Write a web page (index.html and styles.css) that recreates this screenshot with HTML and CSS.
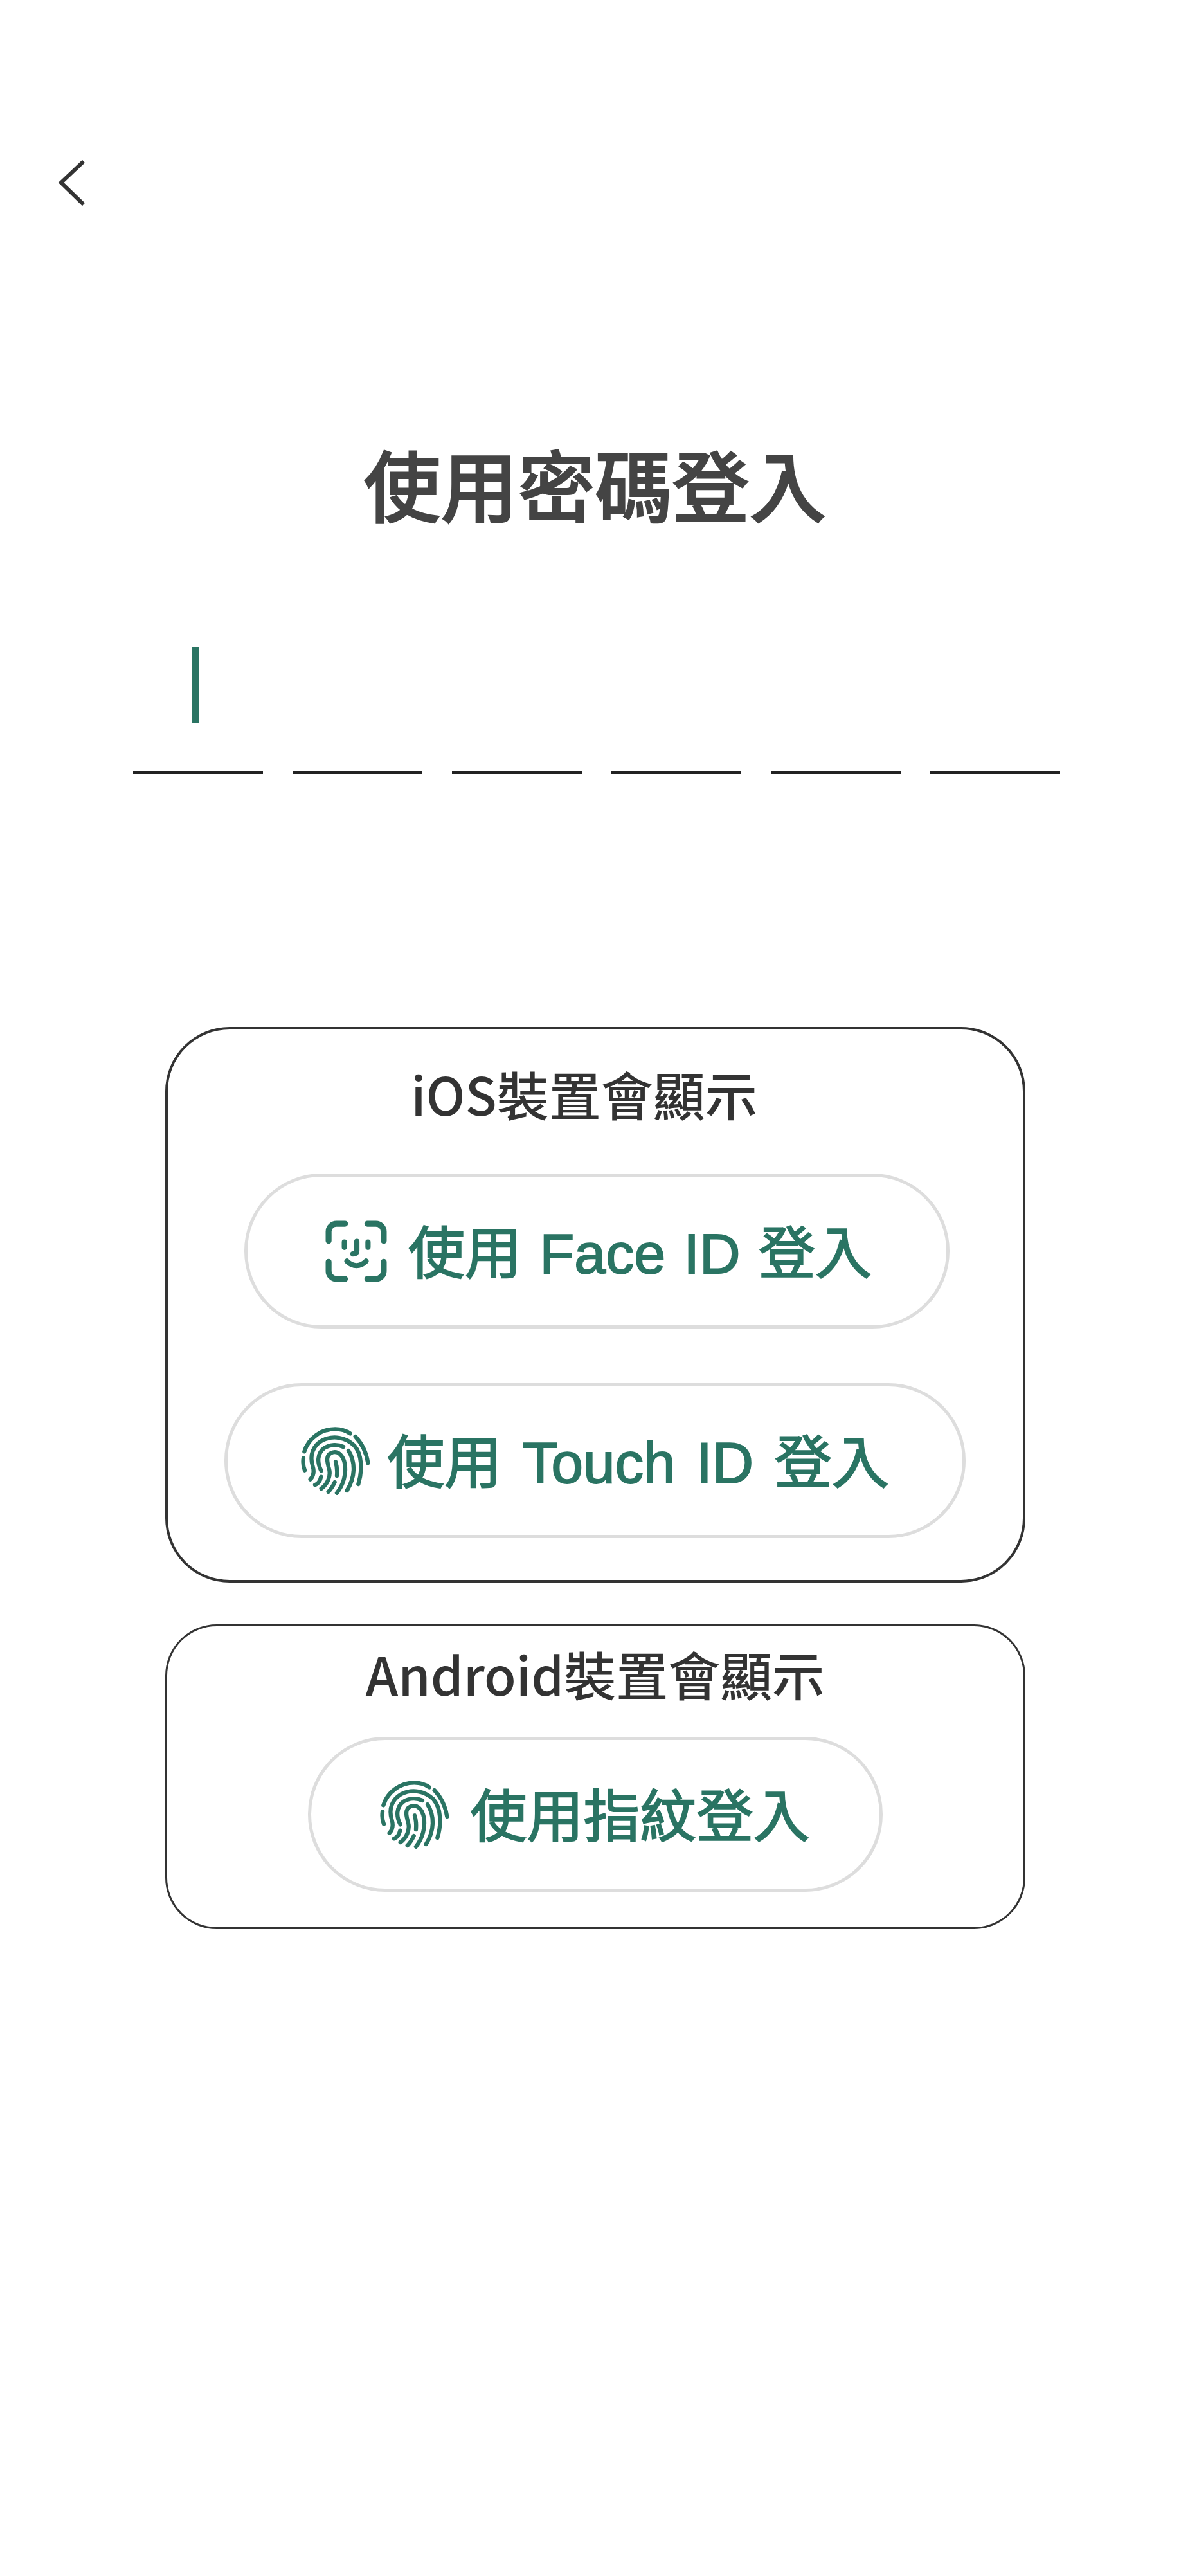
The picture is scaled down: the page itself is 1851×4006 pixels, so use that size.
FILE: index.html
```html
<!DOCTYPE html>
<html lang="zh-Hant">
<head>
  <meta charset="UTF-8">
  <meta name="viewport" content="width=device-width, initial-scale=1.0">
  <title>使用密碼登入</title>
  <link rel="stylesheet" href="styles.css">
</head>
<body>
  <svg width="0" height="0" class="defs">
    <symbol id="fingerprint" viewBox="91 117 322 318">
      <g fill="none" stroke="#2a7463" stroke-width="19" stroke-linecap="round" stroke-linejoin="round">
        <path d="M106 232C125 170 185 127 250 127C277 127 300 134 320 148"/>
        <path d="M344 162C375 195 396 238 403 285"/>
        <path d="M102 262C99 282 101 302 108 320"/>
        <path d="M134 362C150 345 153 325 145 300C130 250 145 205 190 180C240 155 300 165 340 205C375 245 378 320 358 384"/>
        <path d="M185 322C165 285 165 240 200 215C228 198 262 198 288 210"/>
        <path d="M312 228C345 280 345 350 305 414"/>
        <path d="M156 388C172 382 180 368 184 350"/>
        <path d="M185 405C215 385 230 345 222 315C212 280 205 250 232 238C262 225 288 250 295 290C302 335 290 385 258 425"/>
        <path d="M218 420C230 408 240 392 248 375"/>
        <path d="M252 280C258 300 260 322 258 345"/>
      </g>
    </symbol>
  </svg>

  <div class="page">
    <a class="back" href="#">
      <svg width="44" height="74" viewBox="0 0 44 74">
        <path d="M40 4L5 37L40 71" fill="none" stroke="#333" stroke-width="6"/>
      </svg>
    </a>

    <h1 class="title">使用密碼登入</h1>

    <div class="code-row">
      <div class="code-cell active"><span class="caret"></span></div>
      <div class="code-cell"></div>
      <div class="code-cell"></div>
      <div class="code-cell"></div>
      <div class="code-cell"></div>
      <div class="code-cell"></div>
    </div>

    <section class="device-box ios">
      <h2 class="device-label">iOS裝置會顯示</h2>
      <button class="login-btn face">
        <svg class="face-icon" viewBox="0 0 94 94">
          <g fill="none" stroke="#2a7463" stroke-width="9" stroke-linecap="round" stroke-linejoin="round">
            <path d="M5 31V17A12 12 0 0 1 17 5H30"/>
            <path d="M64 5H77A12 12 0 0 1 89 17V31"/>
            <path d="M5 63V77A12 12 0 0 0 17 89H30"/>
            <path d="M64 89H77A12 12 0 0 0 89 77V63"/>
          </g>
          <g fill="none" stroke="#2a7463" stroke-width="8" stroke-linecap="round" stroke-linejoin="round">
            <path d="M29 33V41"/>
            <path d="M65 33V41"/>
            <path d="M48 32V46C48 50 46 51 42 51"/>
            <path d="M33 62C42 71 53 71 62 62"/>
          </g>
        </svg>
        <span class="btn-text">使用 Face ID 登入</span>
      </button>
      <button class="login-btn touch">
        <svg class="finger-icon"><use href="#fingerprint"/></svg>
        <span class="btn-text">使用 Touch ID 登入</span>
      </button>
    </section>

    <section class="device-box android">
      <h2 class="device-label">Android裝置會顯示</h2>
      <button class="login-btn finger">
        <svg class="finger-icon"><use href="#fingerprint"/></svg>
        <span class="btn-text">使用指紋登入</span>
      </button>
    </section>
  </div>
</body>
</html>
```

FILE: styles.css
```css
* {
  margin: 0;
  padding: 0;
  box-sizing: border-box;
}

body {
  background-color: #fff;
  font-family: "Liberation Sans", "Noto Sans CJK TC", sans-serif;
}

.defs {
  display: block;
  height: 0;
}

.page {
  width: 1851px;
  height: 4006px;
  display: flex;
  flex-direction: column;
  align-items: center;
  padding-top: 247px;
}

.back {
  display: block;
  align-self: flex-start;
  margin-left: 90px;
  height: 74px;
}

.title {
  margin-top: 350px;
  height: 160px;
  font-family: "Noto Sans CJK TC", sans-serif;
  font-size: 120px;
  line-height: 160px;
  font-weight: 500;
  color: #444;
  -webkit-text-stroke: 2px #444;
}

.code-row {
  display: flex;
  gap: 46px;
  padding-top: 175px;
  margin-left: 4px;
}

.code-cell {
  width: 202px;
  height: 197px;
  border-bottom: 4px solid #222;
  position: relative;
}

.caret {
  position: absolute;
  left: 92px;
  top: 0;
  width: 10px;
  height: 118px;
  background-color: #2a7463;
}

.device-box {
  width: 1338px;
  border: 4px solid #333;
  display: flex;
  flex-direction: column;
  align-items: center;
}

.ios {
  margin-top: 394px;
  height: 864px;
  border-radius: 100px;
}

.android {
  margin-top: 65px;
  height: 474px;
  border-radius: 80px;
  border-width: 3px;
}

.device-label {
  height: 110px;
  margin-top: 44px;
  font-family: "Noto Sans CJK TC", sans-serif;
  font-size: 81px;
  line-height: 110px;
  font-weight: 500;
  color: #333;
}

.ios .device-label {
  margin-right: 34px;
}

.android .device-label {
  margin-top: 18px;
}

.login-btn {
  display: flex;
  align-items: center;
  justify-content: center;
  height: 241px;
  border: 5px solid #ddd;
  border-radius: 120px;
  background-color: #fff;
  color: #2a7463;
  font-family: inherit;
  font-size: 88px;
  font-weight: 400;
  white-space: nowrap;
  -webkit-text-stroke: 2px #2a7463;
}

.btn-text {
  padding-bottom: 8px;
}

.face {
  width: 1097px;
  margin-top: 70px;
  margin-left: 6px;
  padding-left: 5px;
  gap: 33px;
  word-spacing: 4px;
}

.touch {
  width: 1153px;
  margin-top: 85px;
  gap: 26px;
  font-size: 89px;
  word-spacing: 8px;
}

.finger {
  width: 894px;
  margin-top: 44px;
  gap: 32px;
}

.face-icon {
  width: 96px;
  height: 96px;
}

.finger-icon {
  width: 108px;
  height: 106px;
}
```
